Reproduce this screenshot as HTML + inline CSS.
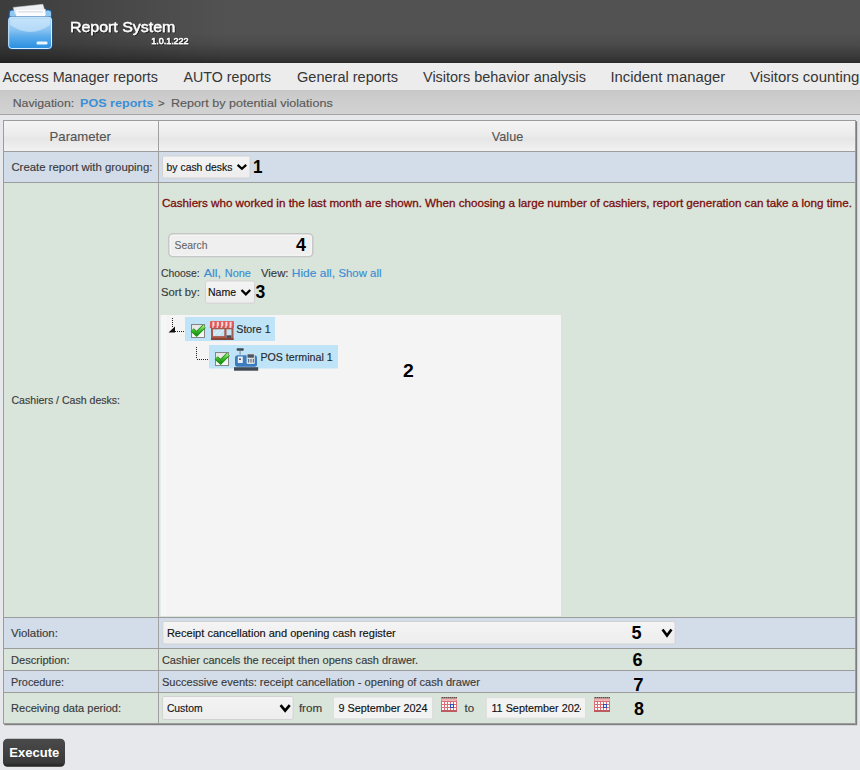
<!DOCTYPE html>
<html><head><meta charset="utf-8"><title>Report System</title>
<style>html,body{margin:0;padding:0;width:860px;height:770px;overflow:hidden;background:#e7e8eb;font-family:"Liberation Sans",sans-serif} svg{display:block}</style>
</head><body><svg width="860" height="770" viewBox="0 0 860 770" font-family="Liberation Sans, sans-serif"><defs>
<linearGradient id="hdr" x1="0" y1="0" x2="0" y2="1">
 <stop offset="0" stop-color="#525252"/><stop offset="0.52" stop-color="#525252"/>
 <stop offset="0.7" stop-color="#4b4b4b"/><stop offset="0.88" stop-color="#3b3b3b"/><stop offset="0.95" stop-color="#333333"/><stop offset="1" stop-color="#2a2a2a"/></linearGradient>
<linearGradient id="hdrl" x1="0" y1="0" x2="1" y2="0"><stop offset="0" stop-color="#000" stop-opacity="0.26"/><stop offset="0.3" stop-color="#000" stop-opacity="0.18"/><stop offset="1" stop-color="#000" stop-opacity="0"/></linearGradient>
<linearGradient id="nav" x1="0" y1="0" x2="0" y2="1">
 <stop offset="0" stop-color="#c6c6c6"/><stop offset="0.12" stop-color="#cacaca"/><stop offset="1" stop-color="#d3d3d3"/></linearGradient>
<linearGradient id="th" x1="0" y1="0" x2="0" y2="1">
 <stop offset="0" stop-color="#f4f4f4"/><stop offset="0.45" stop-color="#ececec"/><stop offset="0.6" stop-color="#e6e6e6"/><stop offset="1" stop-color="#f2f2f2"/></linearGradient>
<linearGradient id="selg" x1="0" y1="0" x2="0" y2="1">
 <stop offset="0" stop-color="#f4f4f4"/><stop offset="1" stop-color="#ededed"/></linearGradient>
<linearGradient id="btn" x1="0" y1="0" x2="0" y2="1">
 <stop offset="0" stop-color="#4a4a4a"/><stop offset="0.85" stop-color="#3a3a3a"/><stop offset="1" stop-color="#202020"/></linearGradient>
<linearGradient id="chk" x1="0" y1="0" x2="0" y2="1">
 <stop offset="0" stop-color="#9be27a"/><stop offset="0.45" stop-color="#4cc238"/><stop offset="1" stop-color="#1d9c13"/></linearGradient>
<linearGradient id="fold" x1="0" y1="0" x2="0" y2="1">
 <stop offset="0" stop-color="#a9d6f8"/><stop offset="0.4" stop-color="#8ac4f1"/><stop offset="0.6" stop-color="#5eaeec"/><stop offset="1" stop-color="#2a8fe0"/></linearGradient>
<filter id="ts" x="-10%" y="-30%" width="120%" height="160%"><feDropShadow dx="0.8" dy="0.8" stdDeviation="0.4" flood-color="#000" flood-opacity="0.7"/></filter>
<filter id="sh" x="-5%" y="-5%" width="110%" height="110%"><feDropShadow dx="1.2" dy="1.2" stdDeviation="0.7" flood-color="#000" flood-opacity="0.45"/></filter>
<linearGradient id="cbg" x1="0" y1="0" x2="0" y2="1"><stop offset="0" stop-color="#e4e4e4"/><stop offset="1" stop-color="#fafafa"/></linearGradient>
<clipPath id="d2clip"><rect x="487" y="698" width="93.8" height="20"/></clipPath>
</defs><rect x="0" y="0" width="860" height="770" fill="#e7e8eb"/><rect x="0" y="0" width="860" height="63" fill="url(#hdr)"/><rect x="0" y="0" width="230" height="63" fill="url(#hdrl)"/><g>
<path d="M9.2 19 V13 Q9.2 10 12 10 L15.5 10 L15.5 18 Z" fill="#8fc8f3" stroke="#0f5aa6" stroke-width="1"/>
<path d="M51.6 19 V13 Q51.6 10 48.8 10 L45.5 10 L45.5 18 Z" fill="#8fc8f3" stroke="#0f5aa6" stroke-width="1"/>
<path d="M13.2 7.4 L42.9 4.3 L46 15 L16 17 Z" fill="#eef1f4" stroke="#c9d0d8" stroke-width="0.5"/>
<path d="M16 9.3 L45.5 9.3 L45.5 17 L16 17 Z" fill="#fbfcfd" stroke="#d5dbe1" stroke-width="0.4"/>
<rect x="18" y="11.5" width="25" height="0.8" fill="#c5ccd3"/>
<rect x="7.8" y="16.2" width="44.6" height="33.2" rx="3.8" fill="#0d58a6"/>
<rect x="8.7" y="17.1" width="42.8" height="31.4" rx="3" fill="url(#fold)" stroke="#d9eefd" stroke-width="1"/>
<path d="M10.2 18.6 L50 18.6 L50 25 Q30 39 10.2 25 Z" fill="#e2f2fd" opacity="0.5"/>
<rect x="36.6" y="41.5" width="10.9" height="3" rx="1.3" fill="#eaf6ff"/>
</g><rect x="0" y="63" width="860" height="27" fill="#ececec"/><rect x="0" y="90" width="860" height="25" fill="url(#nav)"/><rect x="0" y="114" width="860" height="1" fill="#a4a4a4"/><g filter="url(#sh)"><rect x="3" y="120" width="853" height="604" fill="#9c9c9c"/></g><rect x="4" y="121" width="851" height="30" fill="url(#th)"/><rect x="4" y="152" width="851" height="30" fill="#d3dde9"/><rect x="4" y="183" width="851" height="434" fill="#d9e4da"/><rect x="4" y="618" width="851" height="30" fill="#d3dde9"/><rect x="4" y="649" width="851" height="21" fill="#d9e4da"/><rect x="4" y="671" width="851" height="21" fill="#d3dde9"/><rect x="4" y="693" width="851" height="30" fill="#d9e4da"/><rect x="158" y="121" width="1" height="602" fill="#a0a0a0"/><rect x="162.5" y="156.0" width="87.5" height="22" rx="1.5" fill="url(#selg)" stroke="#d2d2d2" stroke-width="1"/><path d="M238.4 165.60000000000002 L241.89999999999998 168.79999999999998 L245.39999999999998 165.60000000000002" fill="none" stroke="#000" stroke-width="2.2" stroke-linecap="square" stroke-linejoin="miter"/><rect x="168.8" y="233.8" width="144" height="22.8" rx="4" fill="#efefef" stroke="#c6c6c6" stroke-width="1.5"/><rect x="170.3" y="235.3" width="141" height="20" rx="3" fill="none" stroke="#f7f7f7" stroke-width="1"/><rect x="205.5" y="281.0" width="49" height="22.2" rx="1.5" fill="url(#selg)" stroke="#d2d2d2" stroke-width="1"/><path d="M242.3 290.8 L245.85 294.4 L249.39999999999998 290.8" fill="none" stroke="#000" stroke-width="2.3" stroke-linecap="square" stroke-linejoin="miter"/><rect x="160.5" y="315" width="400.5" height="301" fill="#f4f4f4"/><rect x="161" y="315" width="6" height="301" fill="#f7f6f6"/><rect x="185" y="317" width="90" height="24" fill="#bfe4f8"/><rect x="209" y="345" width="129" height="23.5" fill="#bfe4f8"/><path d="M172.5 318 V328" stroke="#222" stroke-width="1" stroke-dasharray="1 1" fill="none"/><path d="M175 331.5 H185" stroke="#222" stroke-width="1" stroke-dasharray="1 1" fill="none"/><path d="M168.5 332.5 L175 332.5 L175 326.5 Z" fill="#111"/><path d="M196.5 347 V359" stroke="#222" stroke-width="1" stroke-dasharray="1 1" fill="none"/><path d="M197 359.5 H209" stroke="#222" stroke-width="1" stroke-dasharray="1 1" fill="none"/><rect x="191.5" y="324.5" width="13" height="13" fill="url(#cbg)" stroke="#858585" stroke-width="1"/><path d="M192.2 329.9 L196.6 333.9 L204.2 326.3" fill="none" stroke="#158a0c" stroke-width="4.4" stroke-linejoin="miter" stroke-miterlimit="3"/><path d="M192.2 329.9 L196.6 333.9 L204.2 326.3" fill="none" stroke="url(#chk)" stroke-width="3" stroke-linejoin="miter" stroke-miterlimit="3"/><rect x="215.5" y="352.5" width="13" height="13" fill="url(#cbg)" stroke="#858585" stroke-width="1"/><path d="M216.2 357.9 L220.6 361.9 L228.2 354.3" fill="none" stroke="#158a0c" stroke-width="4.4" stroke-linejoin="miter" stroke-miterlimit="3"/><path d="M216.2 357.9 L220.6 361.9 L228.2 354.3" fill="none" stroke="url(#chk)" stroke-width="3" stroke-linejoin="miter" stroke-miterlimit="3"/><g>
<rect x="211" y="327.5" width="22.5" height="12.5" fill="#a9584b"/>
<rect x="213" y="329.3" width="11.3" height="6.8" fill="#c4e4f3"/>
<path d="M214 335 L219 329.5 M218 335 L223 329.5" stroke="#e6f5fc" stroke-width="1"/>
<rect x="226.5" y="329.3" width="5" height="9" fill="#c4e4f3"/>
<rect x="226.5" y="335.3" width="5" height="3.5" fill="#4f4c5a"/>
<rect x="211" y="338" width="22.5" height="2" fill="#8a4438"/>
<path d="M211.2 321 H233 Q234 321 234 322 V327 H210 V322 Q210 321 211.2 321Z" fill="#e25a5a"/>
<rect x="212.40" y="321.8" width="2.0" height="5.2" fill="#f8dada"/><rect x="216.80" y="321.8" width="2.0" height="5.2" fill="#f8dada"/><rect x="221.20" y="321.8" width="2.0" height="5.2" fill="#f8dada"/><rect x="225.40" y="321.8" width="2.0" height="5.2" fill="#f8dada"/><rect x="229.60" y="321.8" width="2.0" height="5.2" fill="#f8dada"/><circle cx="213.40" cy="327" r="1.05" fill="#f8dada"/><circle cx="217.80" cy="327" r="1.05" fill="#f8dada"/><circle cx="222.20" cy="327" r="1.05" fill="#f8dada"/><circle cx="226.40" cy="327" r="1.05" fill="#f8dada"/><circle cx="230.60" cy="327" r="1.05" fill="#f8dada"/><circle cx="210.90" cy="327.1" r="1.2" fill="#d94f4f"/><circle cx="214.60" cy="327.1" r="1.2" fill="#d94f4f"/><circle cx="219.00" cy="327.1" r="1.2" fill="#d94f4f"/><circle cx="223.30" cy="327.1" r="1.2" fill="#d94f4f"/><circle cx="227.60" cy="327.1" r="1.2" fill="#d94f4f"/><circle cx="232.60" cy="327.1" r="1.2" fill="#d94f4f"/>
</g><g>
<rect x="236.6" y="348.3" width="7.2" height="2.5" rx="1" fill="#3e4650"/>
<rect x="239.5" y="350.8" width="1.2" height="4" fill="#8a96a0"/>
<rect x="235" y="355.2" width="22" height="11.5" rx="2.5" fill="#3b7cc0"/>
<rect x="237.8" y="356.5" width="5" height="6.5" fill="#e8eef4"/>
<rect x="239" y="358.5" width="2" height="1.5" fill="#556"/>
<rect x="246.6" y="353.4" width="8.2" height="10.6" rx="1.2" fill="#d9dee4"/>
<rect x="247.5" y="354.3" width="6.4" height="3.4" fill="#4a5560"/>
<rect x="248" y="359" width="1.2" height="3.5" fill="#6b7680"/><rect x="250.4" y="359" width="1.2" height="3.5" fill="#6b7680"/><rect x="252.8" y="359" width="1.2" height="3.5" fill="#6b7680"/>
<rect x="234" y="367.2" width="24.2" height="3.5" fill="#3f4a55"/>
</g><rect x="162.8" y="621.5" width="512.3" height="22.5" rx="1.5" fill="url(#selg)" stroke="#d2d2d2" stroke-width="1"/><path d="M663.3 630.5999999999999 L667.0 635.6 L670.7 630.5999999999999" fill="none" stroke="#000" stroke-width="2.6" stroke-linecap="square" stroke-linejoin="miter"/><rect x="162.5" y="696.5" width="130.7" height="23" rx="1.5" fill="url(#selg)" stroke="#d2d2d2" stroke-width="1"/><path d="M281.40000000000003 706.0999999999999 L285.15 710.6 L288.9 706.0999999999999" fill="none" stroke="#000" stroke-width="2.6" stroke-linecap="square" stroke-linejoin="miter"/><rect x="333.5" y="697" width="99" height="21.8" fill="#f3f3f3" stroke="#dedede" stroke-width="1"/><rect x="486.3" y="697.7" width="99.2" height="20.5" fill="#f3f3f3" stroke="#dedede" stroke-width="1"/><rect x="441" y="698.6" width="16" height="13.4" fill="#dc6f76"/><rect x="441" y="710" width="16" height="2" fill="#bf5a60"/><rect x="441.5" y="699.6" width="15" height="1.3" fill="#f3c0c0"/><rect x="441.5" y="697" width="1.3" height="1.6" fill="#4a2222"/><rect x="441.5" y="698.6" width="1.3" height="1" fill="#fbe0e0"/><rect x="443.5" y="697" width="1.3" height="1.6" fill="#4a2222"/><rect x="443.5" y="698.6" width="1.3" height="1" fill="#fbe0e0"/><rect x="445.5" y="697" width="1.3" height="1.6" fill="#4a2222"/><rect x="445.5" y="698.6" width="1.3" height="1" fill="#fbe0e0"/><rect x="447.5" y="697" width="1.3" height="1.6" fill="#4a2222"/><rect x="447.5" y="698.6" width="1.3" height="1" fill="#fbe0e0"/><rect x="449.5" y="697" width="1.3" height="1.6" fill="#4a2222"/><rect x="449.5" y="698.6" width="1.3" height="1" fill="#fbe0e0"/><rect x="451.5" y="697" width="1.3" height="1.6" fill="#4a2222"/><rect x="451.5" y="698.6" width="1.3" height="1" fill="#fbe0e0"/><rect x="453.5" y="697" width="1.3" height="1.6" fill="#4a2222"/><rect x="453.5" y="698.6" width="1.3" height="1" fill="#fbe0e0"/><rect x="455.5" y="697" width="1.3" height="1.6" fill="#4a2222"/><rect x="455.5" y="698.6" width="1.3" height="1" fill="#fbe0e0"/><rect x="442" y="702" width="2" height="2" fill="#ffffff"/><rect x="445" y="702" width="2" height="2" fill="#ffffff"/><rect x="448" y="702" width="2" height="2" fill="#ffffff"/><rect x="451" y="702" width="2" height="2" fill="#ffffff"/><rect x="454" y="702" width="2" height="2" fill="#ffffff"/><rect x="442" y="705" width="2" height="2" fill="#ffffff"/><rect x="445" y="705" width="2" height="2" fill="#ffffff"/><rect x="448" y="705" width="2" height="2" fill="#ffffff"/><rect x="451" y="705" width="2" height="2" fill="#ffffff"/><rect x="454" y="705" width="2" height="2" fill="#ffffff"/><rect x="442" y="708" width="2" height="2" fill="#ffffff"/><rect x="445" y="708" width="2" height="2" fill="#ffffff"/><rect x="448" y="708" width="2" height="2" fill="#ffffff"/><rect x="451" y="708" width="2" height="2" fill="#ffffff"/><rect x="454" y="708" width="2" height="2" fill="#ffffff"/><rect x="450.5" y="704.5" width="3" height="3" fill="#dff4ff" stroke="#3450b8" stroke-width="1"/><rect x="594" y="698.6" width="16" height="13.4" fill="#dc6f76"/><rect x="594" y="710" width="16" height="2" fill="#bf5a60"/><rect x="594.5" y="699.6" width="15" height="1.3" fill="#f3c0c0"/><rect x="594.5" y="697" width="1.3" height="1.6" fill="#4a2222"/><rect x="594.5" y="698.6" width="1.3" height="1" fill="#fbe0e0"/><rect x="596.5" y="697" width="1.3" height="1.6" fill="#4a2222"/><rect x="596.5" y="698.6" width="1.3" height="1" fill="#fbe0e0"/><rect x="598.5" y="697" width="1.3" height="1.6" fill="#4a2222"/><rect x="598.5" y="698.6" width="1.3" height="1" fill="#fbe0e0"/><rect x="600.5" y="697" width="1.3" height="1.6" fill="#4a2222"/><rect x="600.5" y="698.6" width="1.3" height="1" fill="#fbe0e0"/><rect x="602.5" y="697" width="1.3" height="1.6" fill="#4a2222"/><rect x="602.5" y="698.6" width="1.3" height="1" fill="#fbe0e0"/><rect x="604.5" y="697" width="1.3" height="1.6" fill="#4a2222"/><rect x="604.5" y="698.6" width="1.3" height="1" fill="#fbe0e0"/><rect x="606.5" y="697" width="1.3" height="1.6" fill="#4a2222"/><rect x="606.5" y="698.6" width="1.3" height="1" fill="#fbe0e0"/><rect x="608.5" y="697" width="1.3" height="1.6" fill="#4a2222"/><rect x="608.5" y="698.6" width="1.3" height="1" fill="#fbe0e0"/><rect x="595" y="702" width="2" height="2" fill="#ffffff"/><rect x="598" y="702" width="2" height="2" fill="#ffffff"/><rect x="601" y="702" width="2" height="2" fill="#ffffff"/><rect x="604" y="702" width="2" height="2" fill="#ffffff"/><rect x="607" y="702" width="2" height="2" fill="#ffffff"/><rect x="595" y="705" width="2" height="2" fill="#ffffff"/><rect x="598" y="705" width="2" height="2" fill="#ffffff"/><rect x="601" y="705" width="2" height="2" fill="#ffffff"/><rect x="604" y="705" width="2" height="2" fill="#ffffff"/><rect x="607" y="705" width="2" height="2" fill="#ffffff"/><rect x="595" y="708" width="2" height="2" fill="#ffffff"/><rect x="598" y="708" width="2" height="2" fill="#ffffff"/><rect x="601" y="708" width="2" height="2" fill="#ffffff"/><rect x="604" y="708" width="2" height="2" fill="#ffffff"/><rect x="607" y="708" width="2" height="2" fill="#ffffff"/><rect x="603.5" y="704.5" width="3" height="3" fill="#dff4ff" stroke="#3450b8" stroke-width="1"/><rect x="3" y="738.8" width="62" height="28" rx="4.5" fill="url(#btn)"/><text x="69.90" y="32.00" font-size="14.5" font-weight="normal" fill="#fff" textLength="105.49" lengthAdjust="spacingAndGlyphs" filter="url(#ts)" stroke="#fff" stroke-width="0.35">Report System</text>
<text x="151.20" y="44.20" font-size="9" font-weight="normal" fill="#fff" textLength="37.41" lengthAdjust="spacingAndGlyphs" filter="url(#ts)" stroke="#fff" stroke-width="0.45">1.0.1.222</text>
<text x="2.40" y="81.80" font-size="14" font-weight="normal" fill="#363636" textLength="155.60" lengthAdjust="spacingAndGlyphs" >Access Manager reports</text>
<text x="183.60" y="81.80" font-size="14" font-weight="normal" fill="#363636" textLength="87.40" lengthAdjust="spacingAndGlyphs" >AUTO reports</text>
<text x="297.00" y="81.80" font-size="14" font-weight="normal" fill="#363636" textLength="101.00" lengthAdjust="spacingAndGlyphs" >General reports</text>
<text x="423.00" y="81.80" font-size="14" font-weight="normal" fill="#363636" textLength="163.00" lengthAdjust="spacingAndGlyphs" >Visitors behavior analysis</text>
<text x="610.44" y="81.80" font-size="14" font-weight="normal" fill="#363636" textLength="114.70" lengthAdjust="spacingAndGlyphs" >Incident manager</text>
<text x="750.00" y="81.80" font-size="14" font-weight="normal" fill="#363636" textLength="109.34" lengthAdjust="spacingAndGlyphs" >Visitors counting</text>
<text x="12.70" y="107.00" font-size="11.5" font-weight="normal" fill="#5a5a5a" stroke="#5a5a5a" stroke-width="0.15" textLength="61.51" lengthAdjust="spacingAndGlyphs" >Navigation:</text>
<text x="80.00" y="107.00" font-size="11.5" font-weight="bold" fill="#3b8fd6" textLength="73.43" lengthAdjust="spacingAndGlyphs" >POS reports</text>
<text x="158.00" y="107.00" font-size="11.5" font-weight="normal" fill="#5a5a5a" stroke="#5a5a5a" stroke-width="0.15" textLength="6.72" lengthAdjust="spacingAndGlyphs" >&gt;</text>
<text x="171.00" y="107.00" font-size="11.5" font-weight="normal" fill="#5a5a5a" stroke="#5a5a5a" stroke-width="0.15" textLength="161.73" lengthAdjust="spacingAndGlyphs" >Report by potential violations</text>
<text x="49.59" y="140.80" font-size="13" font-weight="normal" fill="#555" stroke="#555" stroke-width="0.15" textLength="61.33" lengthAdjust="spacingAndGlyphs" >Parameter</text>
<text x="491.80" y="140.80" font-size="13" font-weight="normal" fill="#555" stroke="#555" stroke-width="0.15" textLength="31.42" lengthAdjust="spacingAndGlyphs" >Value</text>
<text x="11.40" y="170.80" font-size="11" font-weight="normal" fill="#3a3a3a" stroke="#3a3a3a" stroke-width="0.15" textLength="141.06" lengthAdjust="spacingAndGlyphs" >Create report with grouping:</text>
<text x="11.50" y="403.60" font-size="11" font-weight="normal" fill="#3a3a3a" stroke="#3a3a3a" stroke-width="0.15" textLength="108.55" lengthAdjust="spacingAndGlyphs" >Cashiers / Cash desks:</text>
<text x="11.00" y="636.90" font-size="11" font-weight="normal" fill="#3a3a3a" stroke="#3a3a3a" stroke-width="0.15" textLength="46.86" lengthAdjust="spacingAndGlyphs" >Violation:</text>
<text x="11.00" y="664.00" font-size="11" font-weight="normal" fill="#3a3a3a" stroke="#3a3a3a" stroke-width="0.15" textLength="58.56" lengthAdjust="spacingAndGlyphs" >Description:</text>
<text x="11.00" y="686.10" font-size="11" font-weight="normal" fill="#3a3a3a" stroke="#3a3a3a" stroke-width="0.15" textLength="53.06" lengthAdjust="spacingAndGlyphs" >Procedure:</text>
<text x="11.00" y="712.10" font-size="11" font-weight="normal" fill="#3a3a3a" stroke="#3a3a3a" stroke-width="0.15" textLength="110.06" lengthAdjust="spacingAndGlyphs" >Receiving data period:</text>
<text x="166.60" y="170.50" font-size="11" font-weight="normal" fill="#111" stroke="#111" stroke-width="0.15" textLength="65.83" lengthAdjust="spacingAndGlyphs" >by cash desks</text>
<text x="161.90" y="207.20" font-size="11" font-weight="normal" fill="#7a0c0c" textLength="690.06" lengthAdjust="spacingAndGlyphs" stroke="#7a0c0c" stroke-width="0.28">Cashiers who worked in the last month are shown. When choosing a large number of cashiers, report generation can take a long time.</text>
<text x="174.50" y="248.80" font-size="11" font-weight="normal" fill="#666" textLength="32.91" lengthAdjust="spacingAndGlyphs" stroke="#666" stroke-width="0.1">Search</text>
<text x="161.00" y="276.70" font-size="11" font-weight="normal" fill="#3a3a3a" stroke="#3a3a3a" stroke-width="0.15" textLength="38.75" lengthAdjust="spacingAndGlyphs" >Choose:</text>
<text x="203.80" y="276.70" font-size="11" font-weight="normal" fill="#3a8ed4" stroke="#3a8ed4" stroke-width="0.15" textLength="17.26" lengthAdjust="spacingAndGlyphs" >All,</text>
<text x="224.80" y="276.70" font-size="11" font-weight="normal" fill="#3a8ed4" stroke="#3a8ed4" stroke-width="0.15" textLength="26.02" lengthAdjust="spacingAndGlyphs" >None</text>
<text x="261.00" y="276.70" font-size="11" font-weight="normal" fill="#3a3a3a" stroke="#3a3a3a" stroke-width="0.15" textLength="27.46" lengthAdjust="spacingAndGlyphs" >View:</text>
<text x="291.80" y="276.70" font-size="11" font-weight="normal" fill="#3a8ed4" stroke="#3a8ed4" stroke-width="0.15" textLength="43.26" lengthAdjust="spacingAndGlyphs" >Hide all,</text>
<text x="338.40" y="276.70" font-size="11" font-weight="normal" fill="#3a8ed4" stroke="#3a8ed4" stroke-width="0.15" textLength="43.06" lengthAdjust="spacingAndGlyphs" >Show all</text>
<text x="161.00" y="295.70" font-size="11" font-weight="normal" fill="#3a3a3a" stroke="#3a3a3a" stroke-width="0.15" textLength="38.76" lengthAdjust="spacingAndGlyphs" >Sort by:</text>
<text x="208.00" y="295.70" font-size="11" font-weight="normal" fill="#111" stroke="#111" stroke-width="0.15" textLength="28.11" lengthAdjust="spacingAndGlyphs" >Name</text>
<text x="236.30" y="333.00" font-size="11" font-weight="normal" fill="#2a2a2a" stroke="#2a2a2a" stroke-width="0.15" textLength="34.31" lengthAdjust="spacingAndGlyphs" >Store 1</text>
<text x="260.40" y="361.40" font-size="11" font-weight="normal" fill="#2a2a2a" stroke="#2a2a2a" stroke-width="0.15" textLength="72.31" lengthAdjust="spacingAndGlyphs" >POS terminal 1</text>
<text x="166.90" y="637.00" font-size="11" font-weight="normal" fill="#111" stroke="#111" stroke-width="0.15" textLength="228.86" lengthAdjust="spacingAndGlyphs" >Receipt cancellation and opening cash register</text>
<text x="161.90" y="664.30" font-size="11" font-weight="normal" fill="#3a3a3a" stroke="#3a3a3a" stroke-width="0.15" textLength="256.26" lengthAdjust="spacingAndGlyphs" >Cashier cancels the receipt then opens cash drawer.</text>
<text x="161.90" y="685.70" font-size="11" font-weight="normal" fill="#3a3a3a" stroke="#3a3a3a" stroke-width="0.15" textLength="317.96" lengthAdjust="spacingAndGlyphs" >Successive events: receipt cancellation - opening of cash drawer</text>
<text x="166.90" y="711.80" font-size="11" font-weight="normal" fill="#111" stroke="#111" stroke-width="0.15" textLength="35.65" lengthAdjust="spacingAndGlyphs" >Custom</text>
<text x="298.90" y="711.70" font-size="11" font-weight="normal" fill="#3a3a3a" stroke="#3a3a3a" stroke-width="0.15" textLength="23.27" lengthAdjust="spacingAndGlyphs" >from</text>
<text x="338.40" y="712.00" font-size="11" font-weight="normal" fill="#111" stroke="#111" stroke-width="0.15" textLength="89.12" lengthAdjust="spacingAndGlyphs" >9 September 2024</text>
<text x="464.50" y="711.70" font-size="11" font-weight="normal" fill="#3a3a3a" stroke="#3a3a3a" stroke-width="0.15" textLength="9.62" lengthAdjust="spacingAndGlyphs" >to</text>
<text x="9.30" y="757.00" font-size="13" font-weight="bold" fill="#fff" textLength="49.93" lengthAdjust="spacingAndGlyphs" >Execute</text>
<text x="253.08" y="172.70" font-size="18.5" font-weight="bold" fill="#000" textLength="9.49" lengthAdjust="spacingAndGlyphs" >1</text>
<text x="296.00" y="250.70" font-size="18.5" font-weight="bold" fill="#000" textLength="9.91" lengthAdjust="spacingAndGlyphs" >4</text>
<text x="255.50" y="298.20" font-size="18.5" font-weight="bold" fill="#000" textLength="9.77" lengthAdjust="spacingAndGlyphs" >3</text>
<text x="403.00" y="377.20" font-size="18.5" font-weight="bold" fill="#000" textLength="10.80" lengthAdjust="spacingAndGlyphs" >2</text>
<text x="631.60" y="639.00" font-size="18.5" font-weight="bold" fill="#000" textLength="10.08" lengthAdjust="spacingAndGlyphs" >5</text>
<text x="632.40" y="665.70" font-size="18.5" font-weight="bold" fill="#000" textLength="10.08" lengthAdjust="spacingAndGlyphs" >6</text>
<text x="633.30" y="691.40" font-size="18.5" font-weight="bold" fill="#000" textLength="10.29" lengthAdjust="spacingAndGlyphs" >7</text>
<text x="633.90" y="714.90" font-size="18.5" font-weight="bold" fill="#000" textLength="9.98" lengthAdjust="spacingAndGlyphs" >8</text>
<g clip-path="url(#d2clip)"><text x="491.40" y="712" font-size="11" fill="#111" stroke="#111" stroke-width="0.15" textLength="94.34" lengthAdjust="spacingAndGlyphs">11 September 2024</text></g></svg></body></html>
